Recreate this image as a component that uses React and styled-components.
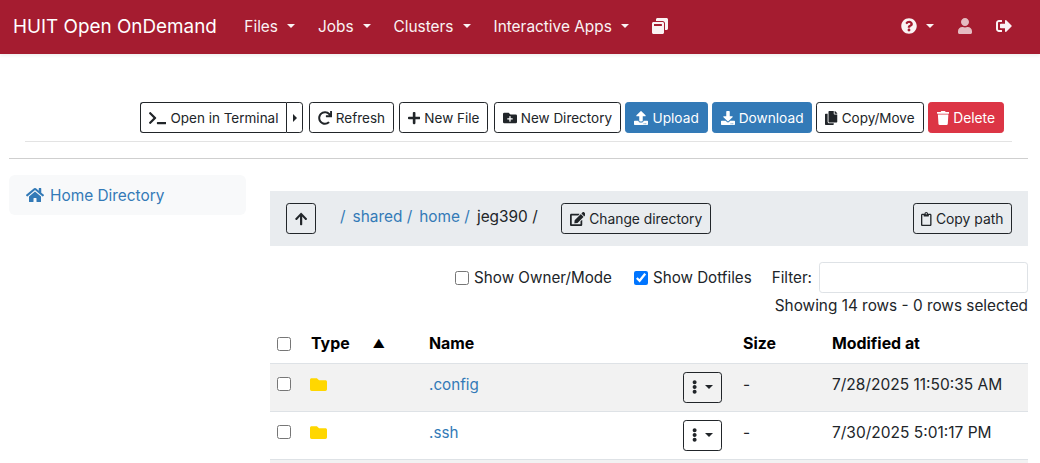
import React from "react";
import styled, { createGlobalStyle } from "styled-components";
import {
  FaArrowUp, FaCopy, FaDownload, FaEdit, FaEllipsisV, FaFolder, FaFolderPlus, FaHome, FaPlus,
  FaQuestionCircle, FaRedo, FaRegClipboard, FaSignOutAlt, FaTerminal, FaTrash, FaUpload, FaUser, FaWindowRestore,
} from "react-icons/fa";

const Global = createGlobalStyle`
  html, body { margin: 0; padding: 0; height: 463px; overflow: hidden; background: #fff; }
  body { font-family: Inter, "Liberation Sans", sans-serif; font-size: 16px; color: #212529; }
  * { box-sizing: border-box; }
`;

const Navbar = styled.nav`
  height: 54px; background: #a51c30; color: #fff; display: flex; align-items: center; padding: 0 28px 2px 13px;
  box-shadow: 0 2px 3px rgba(0,0,0,.06);
`;
const Brand = styled.a`font-size: 18.85px; margin-right: 27.5px; white-space: nowrap;`;
const NavItem = styled.a`
  display: flex; align-items: center; font-size: 15.4px; margin-right: ${p => p.$mr ?? 23}px; opacity: ${p => p.$dim ? .7 : .95}; white-space: nowrap;
`;
const Caret = styled.span`
  display: inline-block; margin-left: ${p => p.$ml ?? 9}px; border-top: ${p => p.$s ?? 4}px solid currentColor;
  border-left: ${p => p.$s ?? 4}px solid transparent; border-right: ${p => p.$s ?? 4}px solid transparent;
`;
const Spacer = styled.div`flex: 1;`;

const Toolbar = styled.div`
  margin: 48px 28px 0 25px; padding: 0 8px 8px 0; display: flex; justify-content: flex-end; gap: 4.4px;
  border-bottom: 1px solid #e3e3e3;
`;
const ToolGroup = styled.div`display: flex; gap: ${p => p.$gap}px;`;
const Btn = styled.button`
  height: 31px; padding: 0 ${p => p.$px ?? 7.5}px; font: ${p => p.$fs ?? 13.5}px Inter, "Liberation Sans", sans-serif; border-radius: 3.2px;
  display: inline-flex; align-items: center; gap: 4px; white-space: nowrap; cursor: pointer;
  color: ${p => p.$fg ?? "#212529"}; background: ${p => p.$bg ?? "transparent"}; border: 1px solid ${p => p.$bd ?? "#212529"};
  svg { flex: none; height: 14px; width: 14px; }
`;
const TerminalIcon = styled(FaTerminal)`&& { width: 17.5px; }`;
const PlusIcon = styled(FaPlus)`&& { width: 12.25px; }`;
const CopyIcon = styled(FaCopy)`&& { width: 12.25px; }`;
const TrashIcon = styled(FaTrash)`&& { width: 12.25px; }`;
const EditIcon = styled(FaEdit)`&& { width: 15.75px; }`;
const ClipIcon = styled(FaRegClipboard)`&& { width: 10.5px; }`;
const ArrowIcon = styled(FaArrowUp)`&& { width: 12.25px; }`;
const DotsIcon = styled(FaEllipsisV)`&& { width: 5.25px; }`;

const Split = styled.div`display: flex;`;
const SplitMain = styled(Btn)`border-radius: 3.2px 0 0 3.2px; border-right: 0; padding: 0 8px;`;
const SplitToggle = styled(Btn)`border-radius: 0 3.2px 3.2px 0; padding: 0; width: 17px; justify-content: center;`;
const CaretRight = styled.span`
  border-left: 4px solid #212529; border-top: 4px solid transparent; border-bottom: 4px solid transparent;
`;
const Rule = styled.hr`margin: 16px 12px 0 9px; border: 0; border-top: 1px solid #cfcfcf;`;

const Main = styled.div`display: grid; grid-template-columns: 237px 758px; column-gap: 24px; margin: 16px 0 0 9px;`;
const SideLink = styled.a`
  height: 40px; background: #f8f9fa; border-radius: 6px; display: flex; align-items: center; gap: 6px;
  padding: 0 0 0 17px; color: #337ab7; font-size: 15.4px;
`;
const Content = styled.div`padding-top: 16px;`;
const PathBar = styled.div`
  height: 55px; background: #e9ecef; display: flex; align-items: center; padding: 0 16px;
`;
const UpBtn = styled(Btn)`width: 30px; padding: 0; justify-content: center;`;
const Crumbs = styled.div`
  display: flex; align-items: center; margin: -4px 0 0 24px; gap: 7px; font-size: 15.4px; width: 221px;
`;
const Crumb = styled.a`color: #337ab7;`;
const CrumbText = styled.span`color: #212529;`;
const Options = styled.div`
  display: flex; justify-content: flex-end; align-items: center; font-size: 15.2px; color: #212529; margin-top: 16px; height: 31px;
`;
const Check = styled.label`display: flex; align-items: center; gap: 5px; margin-right: ${p => p.$mr ?? 0}px;`;
const Box = styled.input.attrs({ type: "checkbox", readOnly: true })`
  width: 14px; height: 14px; margin: 0; accent-color: #0075ff; flex: none;
`;
const Filter = styled.input`
  width: 209px; height: 31px; margin-left: 7px; border: 1px solid #dee2e6; border-radius: 3.2px; background: #fff;
`;
const Status = styled.div`text-align: right; font-size: 15.35px; margin-top: 3px; line-height: 20px;`;
const Table = styled.table`
  width: 100%; margin-top: 11px; border-collapse: collapse; table-layout: fixed; font-size: 15.5px;
`;
const Th = styled.th`
  height: 36px; padding: 0 8px 2px ${p => p.$pl ?? 8}px; text-align: left; font-size: 15.9px; font-weight: 700; color: #000; border-bottom: 1px solid #dee2e6; white-space: nowrap;
`;
const Td = styled.td`
  height: 48px; padding: 0 8px 6px ${p => p.$pl ?? 8}px; background: ${p => p.$odd ? "#f2f2f2" : "#fff"}; border-bottom: 1px solid #dee2e6; white-space: nowrap; overflow: hidden;
`;
const BoxCell = styled.div`display: flex;`;
const TypeHead = styled.div`display: flex; justify-content: space-between; align-items: center; padding-right: 28px;`;
const Up = styled.span`font-size: 12px; color: #000;`;
const Folder = styled(FaFolder)`display: block; color: #ffd700;`;
const NameCell = styled.div`display: flex; align-items: center; justify-content: space-between; padding-right: 5px;`;
const NameLink = styled.a`color: #337ab7; font-size: 15.2px;`;
const ActionBtn = styled(Btn)`position: relative; top: 3px; width: 39px; padding: 0; justify-content: center; gap: 7px;`;

const rows = [
  { name: ".config", date: "7/28/2025 11:50:35 AM", odd: true },
  { name: ".ssh", date: "7/30/2025 5:01:17 PM" },
];

export default function App() {
  return (
    <>
      <Global />
      <Navbar>
        <Brand>HUIT Open OnDemand</Brand>
        <NavItem>Files<Caret /></NavItem>
        <NavItem>Jobs<Caret /></NavItem>
        <NavItem>Clusters<Caret /></NavItem>
        <NavItem>Interactive Apps<Caret /></NavItem>
        <NavItem><FaWindowRestore size={16} /></NavItem>
        <Spacer />
        <NavItem><FaQuestionCircle size={16} /><Caret /></NavItem>
        <NavItem $dim><FaUser size={16} /></NavItem>
        <NavItem $mr={0}><FaSignOutAlt size={16} /></NavItem>
      </Navbar>
      <Toolbar>
        <ToolGroup $gap={5.6}>
          <Split>
            <SplitMain><TerminalIcon />Open in Terminal</SplitMain>
            <SplitToggle><CaretRight /></SplitToggle>
          </Split>
          <Btn $px={7.75}><FaRedo />Refresh</Btn>
          <Btn $px={7.75}><PlusIcon />New File</Btn>
          <Btn $px={8}><FaFolderPlus />New Directory</Btn>
        </ToolGroup>
        <ToolGroup $gap={4.4}>
          <Btn $px={8} $fs={13.7} $bg="#337ab7" $bd="#337ab7" $fg="#fff"><FaUpload />Upload</Btn>
          <Btn $fs={13.7} $bg="#337ab7" $bd="#337ab7" $fg="#fff"><FaDownload />Download</Btn>
          <Btn $px={8}><CopyIcon />Copy/Move</Btn>
          <Btn $px={8} $fs={13.8} $bg="#dc3545" $bd="#dc3545" $fg="#fff"><TrashIcon />Delete</Btn>
        </ToolGroup>
      </Toolbar>
      <Rule />
      <Main>
        <div>
          <SideLink><FaHome size={18} />Home Directory</SideLink>
        </div>
        <Content>
          <PathBar>
            <UpBtn><ArrowIcon /></UpBtn>
            <Crumbs>
              <Crumb>/</Crumb>
              <Crumb>shared /</Crumb>
              <Crumb>home /</Crumb>
              <CrumbText>jeg390 /</CrumbText>
            </Crumbs>
            <Btn $fs={13.8}><EditIcon />Change directory</Btn>
            <Spacer />
            <Btn $fs={13.9}><ClipIcon />Copy path</Btn>
          </PathBar>
          <Options>
            <Check $mr={22}><Box />Show Owner/Mode</Check>
            <Check $mr={20}><Box defaultChecked />Show Dotfiles</Check>
            Filter:<Filter />
          </Options>
          <Status>Showing 14 rows - 0 rows selected</Status>
          <Table>
            <colgroup>
              <col style={{ width: 33 }} />
              <col style={{ width: 118 }} />
              <col style={{ width: 314 }} />
              <col style={{ width: 89 }} />
              <col />
            </colgroup>
            <thead>
              <tr>
                <Th $pl={7}><BoxCell><Box /></BoxCell></Th>
                <Th><TypeHead>Type<Up>▲</Up></TypeHead></Th>
                <Th>Name</Th>
                <Th>Size</Th>
                <Th>Modified at</Th>
              </tr>
            </thead>
            <tbody>
              {rows.map(r => (
                <tr key={r.name}>
                  <Td $odd={r.odd} $pl={7}><BoxCell><Box /></BoxCell></Td>
                  <Td $odd={r.odd} $pl={7}><Folder size={17} /></Td>
                  <Td $odd={r.odd}>
                    <NameCell>
                      <NameLink>{r.name}</NameLink>
                      <ActionBtn><DotsIcon /><Caret $ml={0} $s={4} /></ActionBtn>
                    </NameCell>
                  </Td>
                  <Td $odd={r.odd}>-</Td>
                  <Td $odd={r.odd}>{r.date}</Td>
                </tr>
              ))}
              <tr>
                <Td $odd /><Td $odd /><Td $odd /><Td $odd /><Td $odd />
              </tr>
            </tbody>
          </Table>
        </Content>
      </Main>
    </>
  );
}
